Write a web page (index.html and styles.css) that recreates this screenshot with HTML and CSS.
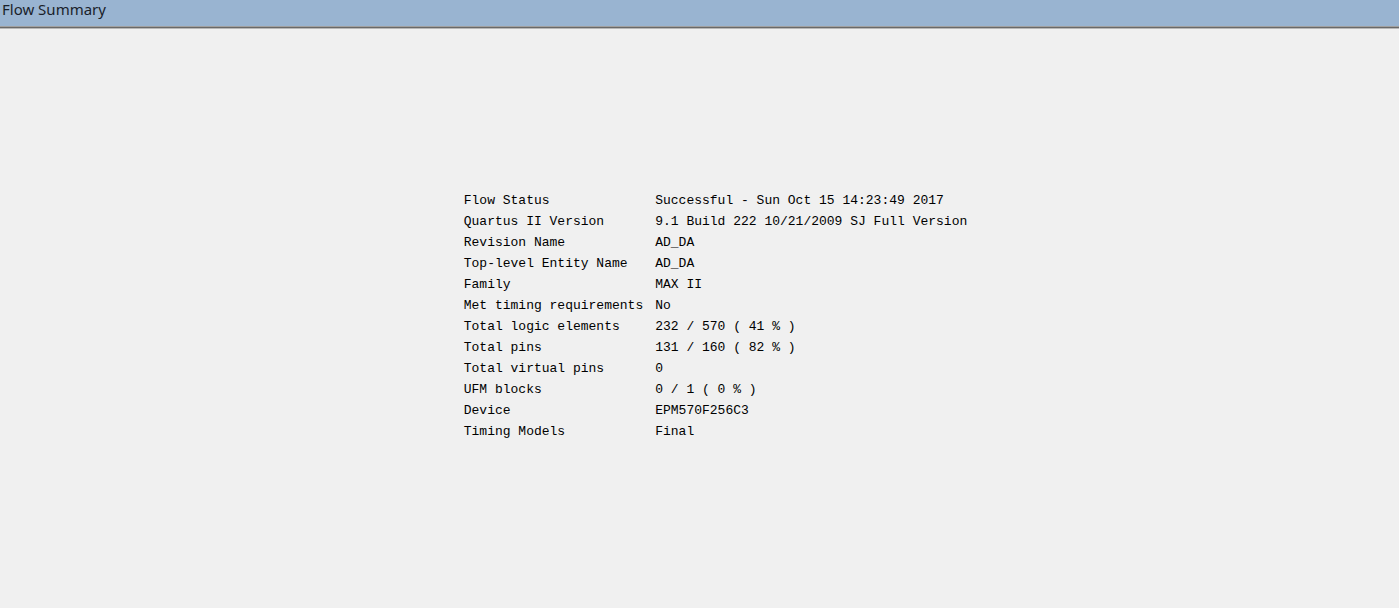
FILE: index.html
```html
<!DOCTYPE html>
<html lang="en">
<head>
<meta charset="utf-8">
<title>Flow Summary</title>
<link rel="stylesheet" href="styles.css">
</head>
<body>
<header class="title-bar"><h1 class="title">Flow Summary</h1></header>
<main class="report">
<table class="summary">
<tbody>
<tr><th scope="row">Flow Status</th><td>Successful - Sun Oct 15 14:23:49 2017</td></tr>
<tr><th scope="row">Quartus II Version</th><td>9.1 Build 222 10/21/2009 SJ Full Version</td></tr>
<tr><th scope="row">Revision Name</th><td>AD_DA</td></tr>
<tr><th scope="row">Top-level Entity Name</th><td>AD_DA</td></tr>
<tr><th scope="row">Family</th><td>MAX II</td></tr>
<tr><th scope="row">Met timing requirements</th><td>No</td></tr>
<tr><th scope="row">Total logic elements</th><td>232 / 570 ( 41 % )</td></tr>
<tr><th scope="row">Total pins</th><td>131 / 160 ( 82 % )</td></tr>
<tr><th scope="row">Total virtual pins</th><td>0</td></tr>
<tr><th scope="row">UFM blocks</th><td>0 / 1 ( 0 % )</td></tr>
<tr><th scope="row">Device</th><td>EPM570F256C3</td></tr>
<tr><th scope="row">Timing Models</th><td>Final</td></tr>
</tbody>
</table>
</main>
</body>
</html>
```
FILE: styles.css
```css
* {
  box-sizing: border-box;
}

body {
  display: flex;
  flex-direction: column;
  min-height: 100vh;
  margin: 0;
  background: #f0f0f0;
  color: #000;
}

.title-bar {
  height: 29px;
  padding-left: 2px;
  border-bottom: 1px solid #b8b8b8;
  background: #99b4d1;
  box-shadow: inset 0 -1px #696969, inset 0 -2px #a0a0a0;
}

.title {
  margin: 0;
  color: #1a1f2b;
  font: 400 15px/18px "Noto Sans", "Open Sans", sans-serif;
}

.report {
  display: flex;
  flex: 1;
  align-items: center;
  justify-content: center;
  padding: 0 0 6px 32px;
}

.summary {
  border-collapse: collapse;
  font: 400 13px/21px "Liberation Mono", monospace;
  white-space: nowrap;
}

.summary th,
.summary td {
  padding: 0;
  font-weight: 400;
  text-align: left;
}

.summary th {
  padding-right: 12px;
}
```
